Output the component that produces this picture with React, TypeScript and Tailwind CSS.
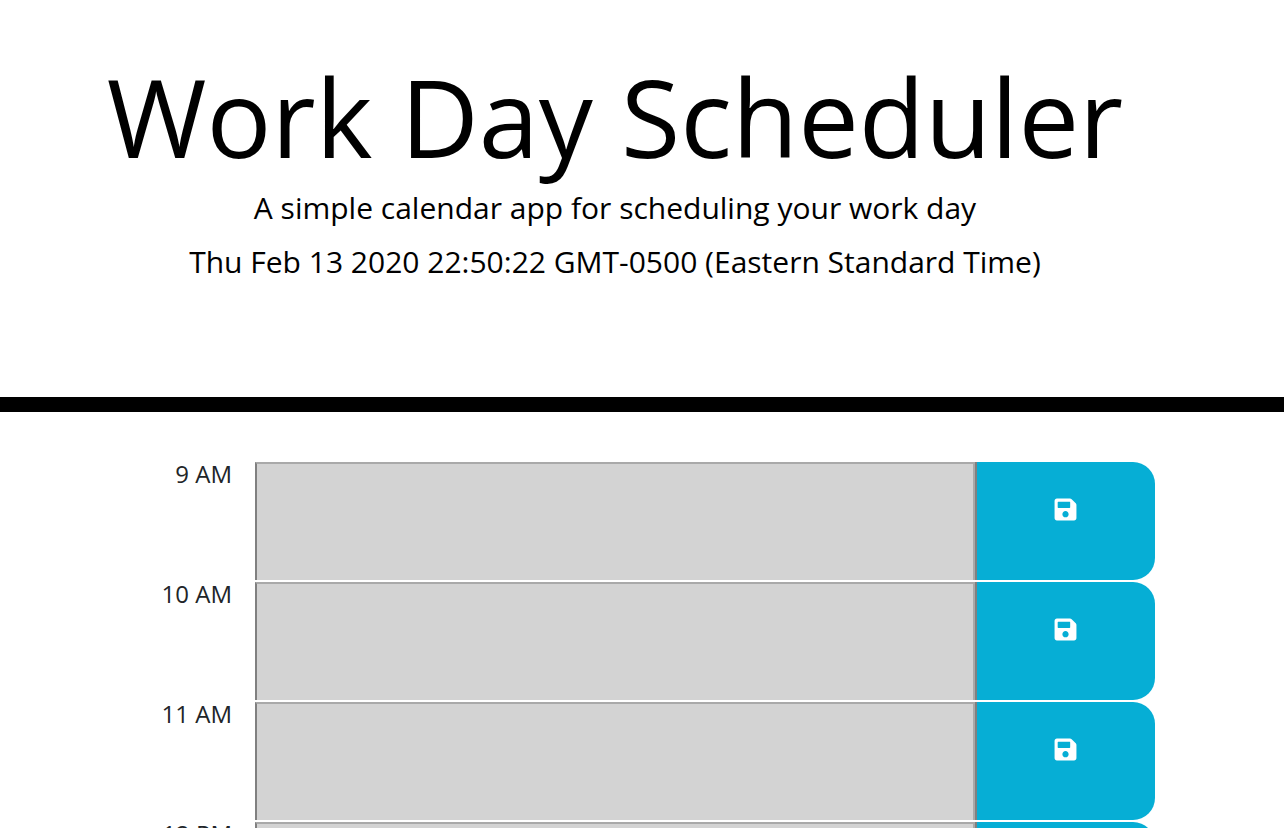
import { FaSave } from "react-icons/fa";

const hours = ["9 AM", "10 AM", "11 AM", "12 PM"];

function TimeBlock({ hour }: { hour: string }) {
  const id = "task-" + hour.replace(" ", "-");
  return (
    <li className="grid h-[118px] grid-cols-12">
      <label htmlFor={id} className="col-span-2 pr-[23px] text-right text-2xl leading-6 text-[#212529]">
        {hour}
      </label>
      <textarea
        id={id}
        className="col-span-8 resize-none border-t-2 border-r-2 border-l-2 border-t-[#a9a9a9] border-r-[#a9a9a9] border-l-[#808080] bg-[#d3d3d3] p-2 text-black"
      />
      <button
        type="button"
        aria-label={"Save " + hour}
        className="col-span-2 flex items-start justify-center rounded-r-[22px] border-l-2 border-[#808080] bg-[#06aed5] pt-[35px] pr-0.5 text-white hover:bg-[#0598ba]"
      >
        <FaSave size={25} />
      </button>
    </li>
  );
}

export default function App() {
  return (
    <div className="h-screen overflow-hidden bg-white font-['Open_Sans',sans-serif] text-black">
      <header className="border-b-[15px] border-black pt-[52px] pr-[54px] pb-[108px] text-center">
        <h1 className="text-[108px] leading-[129px]">Work Day Scheduler</h1>
        <p className="text-[30px] leading-[54px]">A simple calendar app for scheduling your work day</p>
        <p className="text-[30px] leading-[54px]">Thu Feb 13 2020 22:50:22 GMT-0500 (Eastern Standard Time)</p>
      </header>
      <main className="pt-[50px] pr-[54px]">
        <ul className="mx-auto flex max-w-[1080px] flex-col gap-0.5">
          {hours.map((h) => (
            <TimeBlock key={h} hour={h} />
          ))}
        </ul>
      </main>
    </div>
  );
}
